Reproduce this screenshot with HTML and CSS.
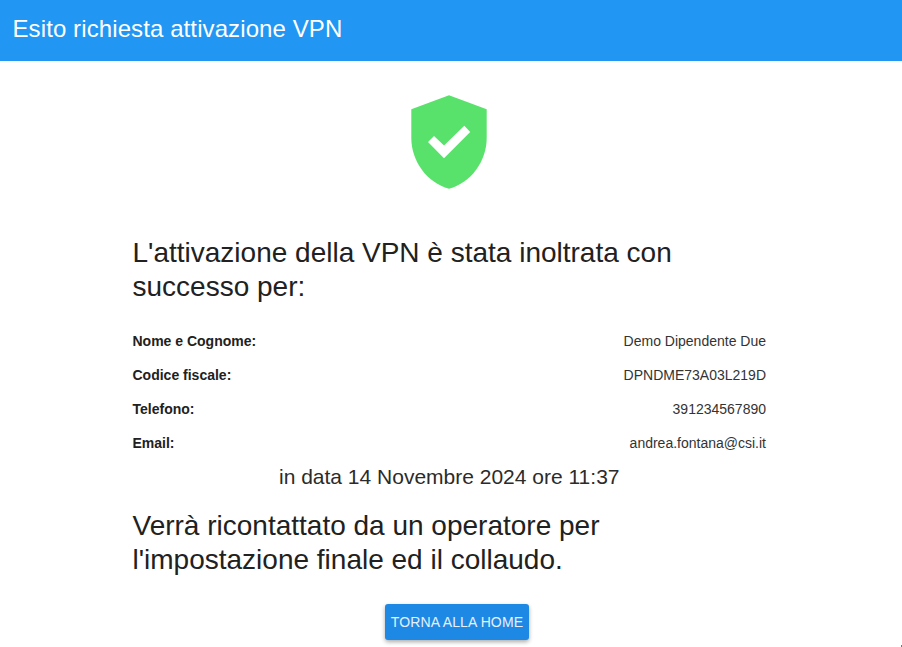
FILE: index.html
```html
<!DOCTYPE html>
<html lang="it">
<head>
<meta charset="utf-8">
<title>Esito richiesta attivazione VPN</title>
<link rel="stylesheet" href="styles.css">
</head>
<body>
<header class="toolbar"><h1>Esito richiesta attivazione VPN</h1></header>
<main class="content">
  <svg class="shield" viewBox="0 0 76 94" aria-hidden="true">
    <path fill="#59e26b" d="M38 .3 75.700 14.200V43C75.700 66 60 88 38 93.700 16 88 .3 66 .3 43V14.200Z"/>
    <path fill="#fff" d="M17 47 23 41 33 50.500 53.300 30.700 59.200 37 33 63.200Z"/>
  </svg>
  <h2 class="message">L'attivazione della VPN è stata inoltrata con successo per:</h2>
  <dl class="details">
    <div class="row"><dt>Nome e Cognome:</dt><dd>Demo Dipendente Due</dd></div>
    <div class="row"><dt>Codice fiscale:</dt><dd>DPNDME73A03L219D</dd></div>
    <div class="row"><dt>Telefono:</dt><dd>391234567890</dd></div>
    <div class="row"><dt>Email:</dt><dd>andrea.fontana@csi.it</dd></div>
  </dl>
  <p class="date">in data 14 Novembre 2024 ore 11:37</p>
  <h2 class="followup">Verrà ricontattato da un operatore per l'impostazione finale ed il collaudo.</h2>
  <button class="home">TORNA ALLA HOME</button>
</main>
<span class="corner"></span>
</body>
</html>
```
FILE: styles.css
```css
* { box-sizing: border-box; }
body { position: relative; margin: 0; height: 647px; overflow: hidden; background: #fff; color: #212121; font-family: "Liberation Sans", Arial, sans-serif; }
.toolbar { height: 61px; padding: 13px 12.5px; background: #2196f3; color: #fff; }
h1 { margin: 0; font-size: 24px; line-height: 32px; font-weight: 400; letter-spacing: .1px; }
.content { width: 633.5px; margin-left: 132.5px; display: flex; flex-direction: column; }
.shield { width: 76px; height: 94px; margin: 34px 0 0 278.5px; }
h2 { margin: 0; font-size: 28px; line-height: 34px; font-weight: 400; }
.message { margin-top: 47px; width: 560px; }
.details { margin: 20px 0 0; }
.row { height: 34px; display: flex; justify-content: space-between; align-items: center; font-size: 14px; line-height: 20px; }
dt { font-weight: 700; }
dd { margin: 0; color: #333; }
.date { margin: 0; text-align: center; font-size: 21px; line-height: 34px; color: #2b2b2b; }
.followup { margin-top: 15px; width: 500px; }
.home { width: 144px; height: 36px; margin: 27px 0 0 252.5px; padding: 0; border: 0; border-radius: 3px; background: #1e88e5; color: #e6f1fc; font: 14px/36px "Liberation Sans", Arial, sans-serif; letter-spacing: .12px; white-space: nowrap; box-shadow: 0 2px 4px #0005; }
.corner { position: absolute; right: 0; bottom: 0; width: 1px; height: 2px; background: #777; }
```
